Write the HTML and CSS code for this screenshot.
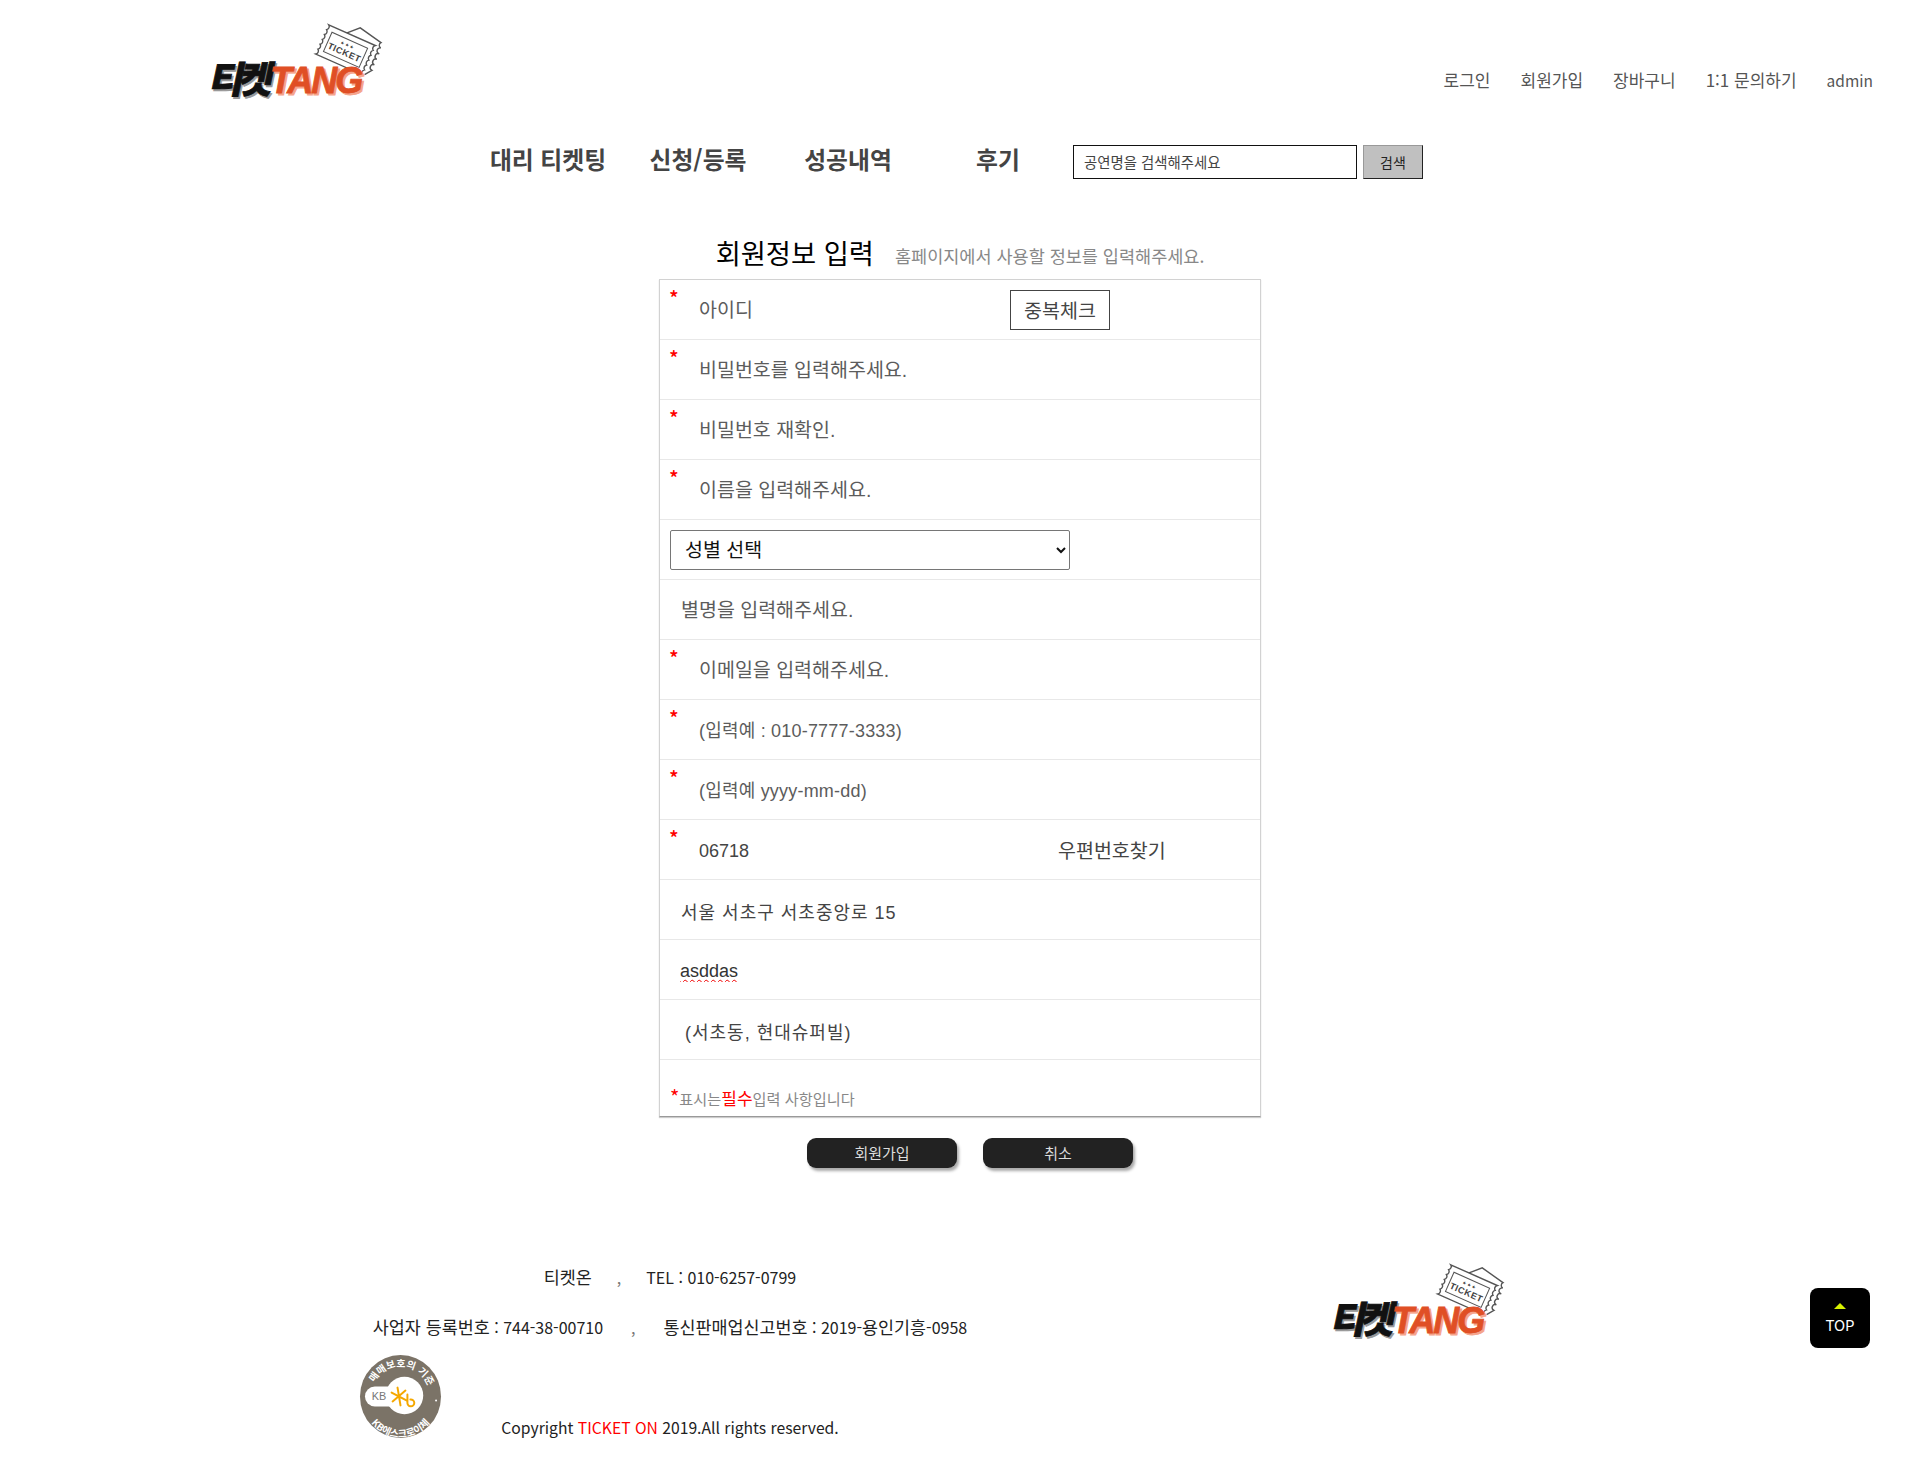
FILE: index.html
```html
<!DOCTYPE html>
<html lang="ko">
<head>
<meta charset="utf-8">
<title>회원정보 입력</title>
<link rel="stylesheet" href="styles.css">
</head>
<body>
<svg class="defs" width="0" height="0" aria-hidden="true">
  <defs>
    <symbol id="brand" viewBox="0 0 176 80" overflow="visible">
      <g transform="translate(138 28) rotate(24)" fill="none" stroke="#555" stroke-width="1.4">
        <path d="M-6 -16 L4 -26 L29 -21 a3 3 0 0 0 2 5 a3 3 0 0 0 1 6 a3 3 0 0 0 0 6 a3 3 0 0 0 0 6 a3 3 0 0 0 0 6 L27 15"/>
        <path fill="#fff" d="M-26 -16 H25 a3.200 3.200 0 0 0 0 5.330 a3.200 3.200 0 0 0 0 5.330 a3.200 3.200 0 0 0 0 5.330 a3.200 3.200 0 0 0 0 5.330 a3.200 3.200 0 0 0 0 5.330 a3.200 3.200 0 0 0 0 5.330 H-26 a3.200 3.200 0 0 0 0 -5.330 a3.200 3.200 0 0 0 0 -5.330 a3.200 3.200 0 0 0 0 -5.330 a3.200 3.200 0 0 0 0 -5.330 a3.200 3.200 0 0 0 0 -5.330 a3.200 3.200 0 0 0 0 -5.330 Z"/>
        <rect x="-20" y="-10.500" width="39" height="21" stroke-width="1"/>
        <text class="logo-ticket" x="-0.500" y="6" text-anchor="middle">TICKET</text>
        <text class="logo-dots" x="-0.500" y="-3.500" text-anchor="middle">★★★</text>
      </g>
      <g transform="translate(0 72) skewX(-12)">
        <text class="logo-kr logo-kr-shadow" x="2" y="1">티켓</text>
        <text class="logo-kr" x="0" y="-1">티켓</text>
      </g>
      <g transform="translate(0 72)">
        <text class="logo-en logo-en-shadow" x="64" y="1">TANG</text>
        <text class="logo-en" x="62" y="-1">TANG</text>
      </g>
    </symbol>
  </defs>
</svg>

<header class="top">
  <a class="brand" href="#"><svg class="brand-svg"><use href="#brand"/></svg></a>
  <nav class="util">
    <a href="#">로그인</a>
    <a href="#">회원가입</a>
    <a href="#">장바구니</a>
    <a href="#">1:1 문의하기</a>
    <a class="util-en" href="#">admin</a>
  </nav>
</header>

<div class="menu">
  <a href="#">대리 티켓팅</a>
  <a href="#">신청/등록</a>
  <a href="#">성공내역</a>
  <a href="#">후기</a>
  <form class="search">
    <input class="search-input" type="text" placeholder="공연명을 검색해주세요">
    <button class="search-btn" type="button">검색</button>
  </form>
</div>

<main>
  <div class="heading">
    <h2>회원정보 입력</h2>
    <p>홈페이지에서 사용할 정보를 입력해주세요.</p>
  </div>

  <form class="join">
    <div class="row"><span class="req">*</span><input class="field ko short" placeholder="아이디"><button class="dup" type="button">중복체크</button></div>
    <div class="row"><span class="req">*</span><input class="field ko" type="text" placeholder="비밀번호를 입력해주세요."></div>
    <div class="row"><span class="req">*</span><input class="field ko" type="text" placeholder="비밀번호 재확인."></div>
    <div class="row"><span class="req">*</span><input class="field ko" placeholder="이름을 입력해주세요."></div>
    <div class="row"><select class="gender"><option>성별 선택</option></select></div>
    <div class="row plain"><input class="field ko" placeholder="별명을 입력해주세요."></div>
    <div class="row"><span class="req">*</span><input class="field ko" placeholder="이메일을 입력해주세요."></div>
    <div class="row"><span class="req">*</span><input class="field mixed" placeholder="(입력예 : 010-7777-3333)"></div>
    <div class="row"><span class="req">*</span><input class="field mixed" placeholder="(입력예 yyyy-mm-dd)"></div>
    <div class="row"><span class="req">*</span><input class="field short" value="06718"><a class="zip" href="#">우편번호찾기</a></div>
    <div class="row plain"><input class="field spaced" value="서울 서초구 서초중앙로 15"></div>
    <div class="row plain"><input class="field typo" value="asddas"></div>
    <div class="row plain extra"><input class="field spaced" value="(서초동, 현대슈퍼빌)"></div>
    <p class="note"><span class="note-star">*</span>표시는<strong>필수</strong>입력 사항입니다</p>
  </form>

  <div class="actions">
    <button class="act" type="button">회원가입</button>
    <button class="act" type="button">취소</button>
  </div>
</main>

<footer class="foot">
  <div class="foot-info">
    <p class="foot-line line-one"><span class="ko-text">티켓온</span><span class="sep">,</span>TEL : 010-6257-0799</p>
    <p class="foot-line"><span class="ko-text">사업자 등록번호</span> : 744-38-00710<span class="sep">,</span><span class="ko-text">통신판매업신고번호</span> : 2019-<span class="ko-text">용인기흥</span>-0958</p>
    <div class="foot-bottom">
      <svg class="badge" viewBox="0 0 82 84">
        <defs>
          <path id="arcTop" d="M13 31 A30 30 0 0 1 70 35"/>
          <path id="arcBot" d="M4 52 A37.500 37.500 0 0 0 78 52"/>
        </defs>
        <ellipse cx="41" cy="42" rx="41" ry="42" fill="#7b7367"/>
        <rect x="5" y="32" width="40" height="20" rx="10" fill="#fff"/>
        <circle cx="45" cy="41" r="19" fill="#fff"/>
        <text class="badge-kb" x="12" y="46">KB</text>
        <g stroke="#f5a800" stroke-width="2" fill="none" stroke-linecap="round">
          <path d="M38 33 L41 51 M32 38 L47 46 M33 47 L46 36"/>
          <path d="M48 40 V48 a3.500 3.500 0 1 0 3 -3"/>
        </g>
        <circle cx="77" cy="46" r="1" fill="#fff"/>
        <text class="badge-arc badge-arc-top"><textPath href="#arcTop" startOffset="50%" text-anchor="middle">매매보호의 기준</textPath></text>
        <text class="badge-arc"><textPath href="#arcBot" startOffset="50%" text-anchor="middle">KB에스크로이체</textPath></text>
      </svg>
      <p class="copy">Copyright <em>TICKET ON</em> 2019.All rights reserved.</p>
    </div>
  </div>
  <a class="foot-brand" href="#"><svg class="brand-svg"><use href="#brand"/></svg></a>
</footer>

<a class="to-top" href="#"><span class="arrow"></span>TOP</a>
</body>
</html>
```

FILE: styles.css
```css
* { box-sizing: border-box; }
html, body { margin: 0; padding: 0; }
body {
  width: 1920px;
  height: 1468px;
  overflow: hidden;
  background: #fff;
  color: #222;
  font-family: "Noto Sans CJK KR", "Noto Sans", sans-serif;
}
a { color: inherit; text-decoration: none; }
p, h2 { margin: 0; }
.defs { position: absolute; }

.top {
  height: 145px;
  padding: 22px 47px 0 208px;
  display: flex;
  justify-content: space-between;
  align-items: flex-start;
}
.brand { display: block; width: 176px; height: 80px; }
.brand-svg { display: block; width: 100%; height: 100%; overflow: visible; }
.util {
  display: flex;
  gap: 30px;
  align-items: baseline;
  margin-top: 46px;
  font-size: 17px;
  line-height: 24px;
  color: #555;
}
.util-en { font-size: 15.500px; }

.logo-kr { font: 900 37px "Noto Sans CJK KR", sans-serif; fill: #111; stroke: #111; stroke-width: .8px; letter-spacing: -5px; }
.logo-kr-shadow { fill: #999; stroke: #999; }
.logo-en { font: italic 700 36px "Liberation Sans", sans-serif; fill: #e04f25; stroke: #e04f25; stroke-width: .8px; letter-spacing: -2px; }
.logo-en-shadow { fill: #f5a58c; stroke: #f5a58c; }
.logo-ticket { font: 700 9px "Liberation Sans", sans-serif; fill: #444; stroke: none; letter-spacing: .5px; }
.logo-dots { font: 700 4.500px "Liberation Sans", "DejaVu Sans", sans-serif; fill: #444; stroke: none; letter-spacing: 1px; }

.menu {
  height: 34px;
  padding-left: 473px;
  display: flex;
  align-items: center;
}
.menu > a {
  width: 150px;
  text-align: center;
  font-size: 23.800px;
  font-weight: 700;
  color: #444;
  line-height: 30px;
  margin-top: -6px;
}
.search { display: flex; gap: 6px; }
.search-input {
  width: 284px;
  height: 34px;
  padding: 0 10px 2px;
  border: 1px solid #111;
  font: 14.400px "Noto Sans CJK KR", sans-serif;
  outline: 0;
}
.search-input::placeholder { color: #444; }
.search-btn {
  width: 60px;
  height: 34px;
  background: #c0c0c0;
  border: 1px solid #222;
  border-left-color: #999;
  border-top-color: #999;
  padding: 0 0 1px;
  font: 14px "Noto Sans CJK KR", sans-serif;
  color: #222;
}

.heading {
  height: 100px;
  display: flex;
  justify-content: center;
  align-items: baseline;
  gap: 21px;
  padding-top: 53px;
}
.heading h2 { font-size: 27.300px; font-weight: 400; color: #000; }
.heading p { font-size: 17.500px; color: #888; position: relative; top: -1px; }

.join {
  width: 602px;
  height: 838px;
  margin: 0 auto;
  border: 1px solid #d2d2d2;
  border-bottom-color: #999;
  box-shadow: 0 1px 1px #ccc;
}
.row {
  height: 60px;
  display: flex;
  align-items: center;
  padding-left: 10px;
  border-bottom: 1px solid #e8e8e8;
  position: relative;
}
.req {
  position: absolute;
  left: 9px;
  top: 6px;
  color: #f00;
  font-size: 20px;
  font-weight: 500;
  line-height: 24px;
}
.field {
  border: 0;
  outline: 0;
  padding: 3px 0 0;
  margin-left: 29px;
  width: 540px;
  height: 40px;
  background: transparent;
  font: 18px "Liberation Sans", "Noto Sans CJK KR", sans-serif;
  color: #444;
}
.field::placeholder { color: #5c5c5c; opacity: 1; }
.ko { font-size: 19.500px; padding-top: 1px; }
.mixed { letter-spacing: .2px; }
.spaced { letter-spacing: 1px; }
.plain .field { margin-left: 11px; }
.extra .field { margin-left: 15px; }
.plain .typo { margin-left: 10px; color: #333; text-decoration: underline wavy #f00000 1px; text-underline-offset: 2px; }
.short { width: 310px; }
.dup {
  height: 40px;
  width: 100px;
  margin: 0 0 0 1px;
  background: #fff;
  border: 1px solid #444;
  font: 19.500px "Noto Sans CJK KR", sans-serif;
  color: #444;
  padding: 0;
}
.zip { margin-left: 49px; font-size: 19.500px; color: #444; }
.gender {
  width: 400px;
  height: 40px;
  padding: 0 10px 3px;
  border: 1px solid #767676;
  border-radius: 2px;
  background: #fff;
  font: 19.500px "Noto Sans CJK KR", sans-serif;
  color: #111;
}
.note {
  padding: 25px 0 0 10px;
  font-size: 15.200px;
  color: #888;
  line-height: 24px;
}
.note-star { color: #f00; font-size: 20px; }
.note strong { color: #f00; font-size: 17px; font-weight: 400; }

.actions {
  display: flex;
  gap: 26px;
  justify-content: center;
  margin-top: 21px;
  padding-left: 20px;
}
.act {
  width: 150px;
  height: 30px;
  border: 0;
  border-radius: 9px;
  background: #222;
  color: #ddd;
  font: 15px "Noto Sans CJK KR", sans-serif;
  box-shadow: 2px 3px 3px #aaa;
  padding: 0 0 2px;
}

.foot {
  margin-top: 84px;
  padding-left: 340px;
  display: flex;
  align-items: flex-start;
}
.foot-info { width: 660px; flex: none; }
.foot-line {
  text-align: center;
  font-size: 16px;
  line-height: 50px;
  color: #222;
}
.ko-text { font-size: 17.400px; }
.sep { margin: 0 28px; color: #777; }
.line-one .sep { margin: 0 25px; }
.foot-bottom { position: relative; height: 88px; display: flex; align-items: flex-end; justify-content: center; }
.badge { position: absolute; left: 20px; top: 3px; width: 81px; height: 83px; overflow: visible; }
.badge-kb { font: 11px "Liberation Sans", sans-serif; fill: #777; }
.badge-arc { font: 700 10px "Noto Sans CJK KR", sans-serif; fill: #fff; }
.badge-arc-top { letter-spacing: .2px; }
.copy { font-size: 15.700px; line-height: 24px; color: #222; }
.copy em { font-style: normal; color: #f00; }
.foot-brand { display: block; width: 176px; height: 80px; margin-left: 330px; margin-top: 10px; }

.to-top {
  position: fixed;
  left: 1810px;
  top: 1288px;
  width: 60px;
  height: 60px;
  border-radius: 8px;
  background: #000;
  color: #fff;
  font-size: 15px;
  text-align: center;
  padding-top: 15px;
  line-height: 20px;
}
.arrow {
  display: block;
  width: 0;
  height: 0;
  margin: 0 auto 6px;
  border: 6px solid transparent;
  border-top: 0;
  border-bottom: 6px solid #d6f000;
}
```
